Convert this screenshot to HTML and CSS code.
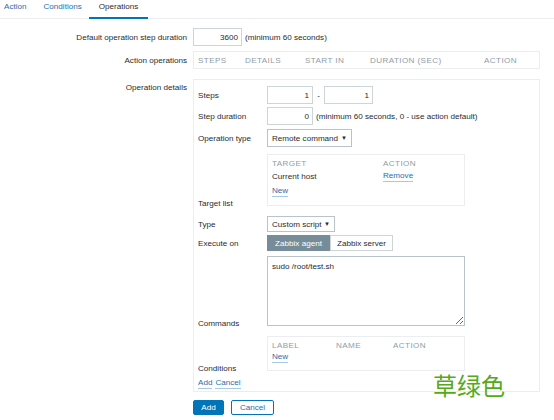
FILE: index.html
```html
<!DOCTYPE html>
<html lang="en">
<head>
    <meta charset="UTF-8">
    <title>Operations</title>
    <link rel="stylesheet" href="styles.css">
</head>
<body>
    <div class="tabs">
        <a class="tab">Action</a>
        <a class="tab">Conditions</a>
        <a class="tab active">Operations</a>
    </div>

    <div class="form">
        <div class="row">
            <label class="label">Default operation step duration</label>
            <div class="field inline">
                <input class="input w49" value="3600">
                <span class="hint">(minimum 60 seconds)</span>
            </div>
        </div>

        <div class="row gap5">
            <label class="label">Action operations</label>
            <div class="field">
                <div class="ops-table">
                    <span class="th c-steps">Steps</span>
                    <span class="th c-details">Details</span>
                    <span class="th c-start">Start in</span>
                    <span class="th c-duration">Duration (sec)</span>
                    <span class="th">Action</span>
                </div>
            </div>
        </div>

        <div class="row gap10 top">
            <label class="label pad">Operation details</label>
            <div class="field">
                <div class="details">
                    <div class="irow">
                        <label class="ilabel">Steps</label>
                        <div class="inline">
                            <input class="input w46" value="1">
                            <span class="dash">-</span>
                            <input class="input w49" value="1">
                        </div>
                    </div>
                    <div class="irow g3">
                        <label class="ilabel">Step duration</label>
                        <div class="inline">
                            <input class="input w46" value="0">
                            <span class="hint">(minimum 60 seconds, 0 - use action default)</span>
                        </div>
                    </div>
                    <div class="irow g4">
                        <label class="ilabel">Operation type</label>
                        <div class="select w85">Remote command <span class="arrow">&#9660;</span></div>
                    </div>
                    <div class="irow g7">
                        <label class="ilabel bottom">Target list</label>
                        <div class="box target-box">
                            <div class="brow head">
                                <span class="c-target">Target</span>
                                <span>Action</span>
                            </div>
                            <div class="brow">
                                <span class="c-target">Current host</span>
                                <a class="link">Remove</a>
                            </div>
                            <div class="brow new"><a class="link">New</a></div>
                        </div>
                    </div>
                    <div class="irow g10">
                        <label class="ilabel">Type</label>
                        <div class="select w68 short">Custom script <span class="arrow">&#9660;</span></div>
                    </div>
                    <div class="irow g3">
                        <label class="ilabel">Execute on</label>
                        <div class="segmented">
                            <span class="seg on">Zabbix agent</span>
                            <span class="seg">Zabbix server</span>
                        </div>
                    </div>
                    <div class="irow g5">
                        <label class="ilabel bottom">Commands</label>
                        <textarea class="commands" readonly>sudo /root/test.sh</textarea>
                    </div>
                    <div class="irow g10">
                        <label class="ilabel bottom">Conditions</label>
                        <div class="box cond-box">
                            <div class="brow head">
                                <span class="c-label">Label</span>
                                <span class="c-name">Name</span>
                                <span>Action</span>
                            </div>
                            <div class="brow"><a class="link">New</a></div>
                        </div>
                    </div>
                    <div class="links">
                        <a class="link">Add</a>
                        <a class="link">Cancel</a>
                    </div>
                </div>
            </div>
        </div>

        <div class="buttons">
            <button class="btn primary">Add</button>
            <button class="btn alt">Cancel</button>
        </div>
    </div>

    <div class="watermark">草绿色</div>
</body>
</html>
```

FILE: styles.css
```css
body {
    margin: 0;
    font-family: 'Liberation Sans', Arial, sans-serif;
    font-size: 8.1px;
    color: #1f2c33;
    background-color: #fff;
}

/* tabs */
.tabs {
    display: flex;
    height: 18px;
    border-bottom: 1px solid #ebeef0;
    margin-left: -4.5px;
}

.tab {
    padding: 0 8.5px 3px;
    line-height: 14px;
    color: #1f6eb0;
    border-bottom: 2px solid transparent;
    margin-bottom: -1px;
}

.tab.active {
    color: #1f2c33;
    border-bottom-color: #0275b8;
    padding: 0 9.5px 3px;
    margin-left: -1px;
}

/* form layout */
.form {
    padding-top: 9px;
}

.row {
    display: grid;
    grid-template-columns: 187px 347px;
    column-gap: 6px;
    align-items: center;
}

.row.top {
    align-items: start;
}

.gap5 {
    margin-top: 5px;
}

.gap10 {
    margin-top: 10px;
}

.label {
    text-align: right;
    line-height: 13px;
}

.label.pad {
    padding-top: 2px;
}

.inline {
    display: flex;
    align-items: center;
}

.hint {
    margin-left: 3px;
    white-space: nowrap;
}

.input {
    box-sizing: border-box;
    height: 18px;
    border: 1px solid #cdd5d9;
    padding: 0 3px;
    font: inherit;
    color: #1f2c33;
    text-align: right;
    background: #fff;
    margin: 0;
}

.w46 { width: 46px; }
.w49 { width: 49px; }

.dash {
    width: 11px;
    text-align: center;
}

.ops-table {
    box-sizing: border-box;
    height: 18px;
    border: 1px solid #ebeef0;
    display: flex;
    align-items: center;
    padding-left: 4px;
}

.th, .head span {
    text-transform: uppercase;
    letter-spacing: 0.4px;
    color: #8f9ca4;
}

.c-steps { width: 47px; }
.c-details { width: 60px; }
.c-start { width: 65px; }
.c-duration { width: 114px; }

/* operation details */
.details {
    border: 1px solid #ebeef0;
    padding: 6px 4px 1px;
}

.irow {
    display: grid;
    grid-template-columns: 69px 198px;
    align-items: center;
}

.g3 { margin-top: 3px; }
.g4 { margin-top: 4px; }
.g5 { margin-top: 5px; }
.g7 { margin-top: 7px; }
.g10 { margin-top: 10px; }

.ilabel {
    line-height: 13px;
}

.ilabel.bottom {
    align-self: end;
    margin-bottom: -4px;
}

.select {
    box-sizing: border-box;
    height: 18px;
    border: 1px solid #b9c4ca;
    display: flex;
    align-items: center;
    justify-content: space-between;
    padding: 0 4px;
    background: #fff;
}

.select.short {
    height: 16px;
}

.w85 { width: 85px; }
.w68 { width: 68px; }

.arrow {
    font-size: 6px;
}

.box {
    box-sizing: border-box;
    border: 1px solid #ebeef0;
    padding: 2px 4px 0;
}

.target-box {
    height: 52px;
}

.cond-box {
    height: 35px;
}

.brow {
    display: flex;
    line-height: 13px;
}

.brow.new {
    margin-top: 3px;
}

.c-target { width: 111px; }
.c-label { width: 64px; }
.c-name { width: 57px; }

.link {
    color: #1f6eb0;
    line-height: 10px;
    align-self: center;
    border-bottom: 1px solid #a9c9e3;
}

.segmented {
    display: flex;
    height: 16px;
}

.seg {
    box-sizing: border-box;
    width: 63px;
    display: flex;
    align-items: center;
    justify-content: center;
    border: 1px solid #cdd5d9;
    background: #fff;
}

.seg.on {
    background: #768d99;
    border-color: #768d99;
    color: #fff;
}

.commands {
    box-sizing: border-box;
    width: 198px;
    height: 70px;
    margin: 0;
    border: 1px solid #b9c4ca;
    padding: 3px 4px;
    font: inherit;
    color: #1f2c33;
    line-height: 13px;
}

.links {
    display: flex;
    gap: 3px;
    margin-top: 6px;
    height: 12px;
    align-items: center;
    padding-bottom: 1px;
}

.buttons {
    display: flex;
    gap: 7px;
    margin: 8px 0 0 193px;
}

.btn {
    box-sizing: border-box;
    height: 15px;
    padding: 0;
    font: inherit;
    border: 1px solid #0275b8;
    border-radius: 2px;
}

.btn.primary {
    width: 31px;
    background: #0275b8;
    color: #fff;
}

.btn.alt {
    width: 43px;
    background: #fff;
    color: #1f6eb0;
}

.watermark {
    position: absolute;
    left: 433px;
    top: 373px;
    font-family: 'Noto Sans CJK SC', sans-serif;
    font-size: 24px;
    line-height: 24px;
    color: #56a91c;
}
```
